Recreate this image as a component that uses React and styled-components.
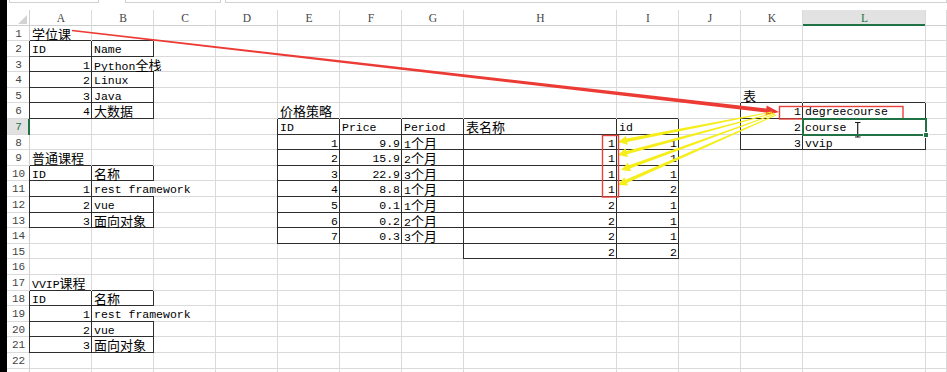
import React from 'react'
import styled, { createGlobalStyle } from 'styled-components'

const GRID = '#dadada'
const HEAD_LINE = '#cfcfcf'
const DARK = '#2e2e2e'
const GREEN = '#217346'

const COLS = [
  { key: 'A', w: 62 },
  { key: 'B', w: 62 },
  { key: 'C', w: 62 },
  { key: 'D', w: 62 },
  { key: 'E', w: 62 },
  { key: 'F', w: 62 },
  { key: 'G', w: 62 },
  { key: 'H', w: 153 },
  { key: 'I', w: 62 },
  { key: 'J', w: 62 },
  { key: 'K', w: 62 },
  { key: 'L', w: 123 },
  { key: '', w: 0 },
]
const ROW_COUNT = 23
const LABELED_ROWS = 22
const ACTIVE = { col: 'L', row: 7 }

const DATA = {
  A1: '学位课',
  A2: 'ID', B2: 'Name',
  A3: 1, B3: 'Python全栈',
  A4: 2, B4: 'Linux',
  A5: 3, B5: 'Java',
  A6: 4, B6: '大数据',
  A9: '普通课程',
  A10: 'ID', B10: '名称',
  A11: 1, B11: 'rest framework',
  A12: 2, B12: 'vue',
  A13: 3, B13: '面向对象',
  A17: 'VVIP课程',
  A18: 'ID', B18: '名称',
  A19: 1, B19: 'rest framework',
  A20: 2, B20: 'vue',
  A21: 3, B21: '面向对象',
  E6: '价格策略',
  E7: 'ID', F7: 'Price', G7: 'Period', H7: '表名称', I7: 'id',
  H15: 2, I15: 2,
  K5: '表',
  K6: 1, L6: 'degreecourse',
  K7: 2, L7: 'course',
  K8: 3, L8: 'vvip',
}

const prices = [9.9, 15.9, 22.9, 8.8, 0.1, 0.2, 0.3]
const periods = ['1个月', '2个月', '3个月', '1个月', '1个月', '2个月', '3个月']
const tables = [1, 1, 1, 1, 2, 2, 2]
const ids = [1, 1, 1, 2, 1, 1, 1]
prices.forEach((p, i) => {
  const r = 8 + i
  DATA['E' + r] = i + 1
  DATA['F' + r] = p
  DATA['G' + r] = periods[i]
  DATA['H' + r] = tables[i]
  DATA['I' + r] = ids[i]
})

// ranges with all borders
const BOXES = [
  ['A', 2, 'B', 6],
  ['A', 10, 'B', 13],
  ['A', 18, 'B', 21],
  ['E', 7, 'I', 14],
  ['H', 15, 'I', 15],
  ['K', 6, 'L', 8],
]
// text overflows into the next column and hides the line
const NO_RIGHT = ['B3', 'B11', 'B19']

const colIdx = k => COLS.findIndex(c => c.key === k)

const inBox = (r, c) =>
  BOXES.some(([c0, r0, c1, r1]) => r >= r0 && r <= r1 && c >= colIdx(c0) && c <= colIdx(c1))

const GlobalStyle = createGlobalStyle`
  html, body {
    margin: 0;
    padding: 0;
    background: #fff;
  }
  body {
    width: 947px;
    height: 372px;
    overflow: hidden;
    font-family: "Liberation Mono", "Noto Sans CJK SC", monospace;
  }
`

const Screen = styled.div`
  position: relative;
  display: flex;
  width: 947px;
  height: 372px;
  overflow: hidden;
  background: #fff;
`

const Edge = styled.div`
  flex: none;
  width: 7px;
  background: #000;
`

const Workbook = styled.div`
  flex: 1;
  min-width: 0;
  display: flex;
  flex-direction: column;
`

const FormulaStrip = styled.div`
  flex: none;
  height: 10px;
  display: flex;
  align-items: flex-start;
  padding-left: 2px;
`

const StripBox = styled.div`
  height: 2px;
  width: ${p => (p.$w ? p.$w + 'px' : 'auto')};
  flex: ${p => (p.$w ? 'none' : '1')};
  margin-left: ${p => p.$gap || 0}px;
  border: 1px solid #d2d2d2;
  border-top: none;
`

const Sheet = styled.div`
  display: grid;
  grid-template-columns: 23px ${COLS.map(c => (c.w ? c.w + 'px' : '1fr')).join(' ')};
  grid-template-rows: 15.5px repeat(${ROW_COUNT}, 15.6px);
  font-size: 11.5px;
  color: #000;
`

const Corner = styled.div`
  position: relative;
  box-shadow: inset -1px 0 0 ${HEAD_LINE}, inset 0 -1px 0 ${HEAD_LINE};

  &::after {
    content: '';
    position: absolute;
    right: 3px;
    bottom: 2px;
    border-style: solid;
    border-width: 0 0 9px 9px;
    border-color: transparent transparent #d3d3d3 transparent;
  }
`

const ColHead = styled.div`
  text-align: center;
  line-height: 16px;
  font-size: 11.5px;
  font-family: "Liberation Serif", serif;
  color: ${p => (p.$active ? GREEN : '#444')};
  background: ${p => (p.$active ? '#e2e2e2' : '#fff')};
  box-shadow: inset -1px 0 0 ${GRID},
    inset 0 ${p => (p.$active ? '-2px' : '-1px')} 0 ${p => (p.$active ? GREEN : HEAD_LINE)};
`

const RowHead = styled.div`
  text-align: center;
  line-height: 16px;
  font-size: 11px;
  color: ${p => (p.$active ? GREEN : '#444')};
  background: ${p => (p.$active ? '#e2e2e2' : '#fff')};
  box-shadow: inset ${p => (p.$active ? '-2px' : '-1px')} 0 0 ${p => p.$right},
    inset 0 -1px 0 ${GRID};
`

const Cell = styled.div`
  position: relative;
  white-space: nowrap;
  line-height: 15.6px;
  padding: 1px 2px 0 2px;
  text-align: ${p => (p.$num ? 'right' : 'left')};
  box-shadow: inset -1px 0 0 ${p => p.$right}, inset 0 -1px 0 ${p => p.$bottom};

  ${p =>
    p.$selected &&
    `
    z-index: 1;
    &::after {
      content: '';
      position: absolute;
      left: -1px;
      top: -1px;
      right: -1px;
      bottom: -1px;
      border: 2px solid ${GREEN};
    }
    &::before {
      content: '';
      position: absolute;
      right: -3px;
      bottom: -3px;
      width: 4px;
      height: 4px;
      background: ${GREEN};
      border: 1px solid #fff;
      z-index: 2;
    }
  `}
`

const Cjk = styled.span`
  font-family: "Noto Sans CJK SC", sans-serif;
  font-size: 13px;
  line-height: 1;
`

const Overlay = styled.svg`
  position: absolute;
  left: 0;
  top: 0;
  width: 947px;
  height: 372px;
  pointer-events: none;
`

const CJK_RE = /([\u3000-\u9fff\uff00-\uffef]+)/

const renderText = v =>
  String(v)
    .split(CJK_RE)
    .map((part, i) => (CJK_RE.test(part) ? <Cjk key={i}>{part}</Cjk> : part))

const arrowPoints = ([x0, y0], [x1, y1], w0, w1, headLen, headHalf) => {
  const len = Math.hypot(x1 - x0, y1 - y0)
  const ux = (x1 - x0) / len
  const uy = (y1 - y0) / len
  const nx = -uy
  const ny = ux
  const bx = x1 - ux * headLen
  const by = y1 - uy * headLen
  const p = (x, y, s) => `${(x + nx * s).toFixed(1)},${(y + ny * s).toFixed(1)}`
  return [
    p(x0, y0, w0 / 2),
    p(bx, by, w1 / 2),
    p(bx, by, headHalf),
    `${x1},${y1}`,
    p(bx, by, -headHalf),
    p(bx, by, -w1 / 2),
    p(x0, y0, -w0 / 2),
  ].join(' ')
}

const YELLOW_ARROWS = [
  { from: [772, 112], to: [618, 142] },
  { from: [774, 113], to: [618, 155] },
  { from: [775, 114], to: [621, 170] },
  { from: [776, 115], to: [618, 185] },
]

const Annotations = () => (
  <Overlay viewBox="0 0 947 372">
    <polygon points={arrowPoints([72, 30.5], [779, 112], 1.4, 4, 13, 5)} fill="#ec3a34" />
    {YELLOW_ARROWS.map((a, i) => (
      <polygon key={i} points={arrowPoints(a.from, a.to, 0.8, 3.4, 9, 4.5)} fill="#f6ee1a" />
    ))}
    <rect x="602.5" y="135.5" width="16" height="61.5" fill="none" stroke="#e8403a" strokeWidth="1.4" />
    <rect x="779.5" y="106.5" width="123.5" height="12.5" fill="none" stroke="#e8403a" strokeWidth="1.4" />
    <path d="M855 122.5 H860.5 M857.7 122.5 V137 M855 137 H860.5" stroke="#1e1e1e" strokeWidth="1.2" fill="none" />
  </Overlay>
)

export default function App() {
  const cells = []
  cells.push(<Corner key="corner" />)
  COLS.forEach((c, ci) =>
    cells.push(
      <ColHead key={'h' + ci} $active={c.key === ACTIVE.col}>
        {c.key}
      </ColHead>
    )
  )
  for (let r = 1; r <= ROW_COUNT; r++) {
    const active = r === ACTIVE.row
    cells.push(
      <RowHead key={'r' + r} $active={active} $right={active ? GREEN : inBox(r, 0) ? DARK : HEAD_LINE}>
        {r <= LABELED_ROWS ? r : null}
      </RowHead>
    )
    COLS.forEach((c, ci) => {
      const ref = c.key + r
      const v = DATA[ref]
      const right = NO_RIGHT.includes(ref)
        ? 'transparent'
        : inBox(r, ci) || inBox(r, ci + 1)
          ? DARK
          : GRID
      const bottom = inBox(r, ci) || inBox(r + 1, ci) ? DARK : GRID
      cells.push(
        <Cell
          key={'c' + ci + '-' + r}
          $num={typeof v === 'number'}
          $right={right}
          $bottom={bottom}
          $selected={c.key === ACTIVE.col && r === ACTIVE.row}
        >
          {v !== undefined ? renderText(v) : null}
        </Cell>
      )
    })
  }

  return (
    <Screen>
      <GlobalStyle />
      <Edge />
      <Workbook>
        <FormulaStrip>
          <StripBox $w={88} />
          <StripBox $w={94} $gap={26} />
          <StripBox $gap={4} />
        </FormulaStrip>
        <Sheet>{cells}</Sheet>
      </Workbook>
      <Annotations />
    </Screen>
  )
}
